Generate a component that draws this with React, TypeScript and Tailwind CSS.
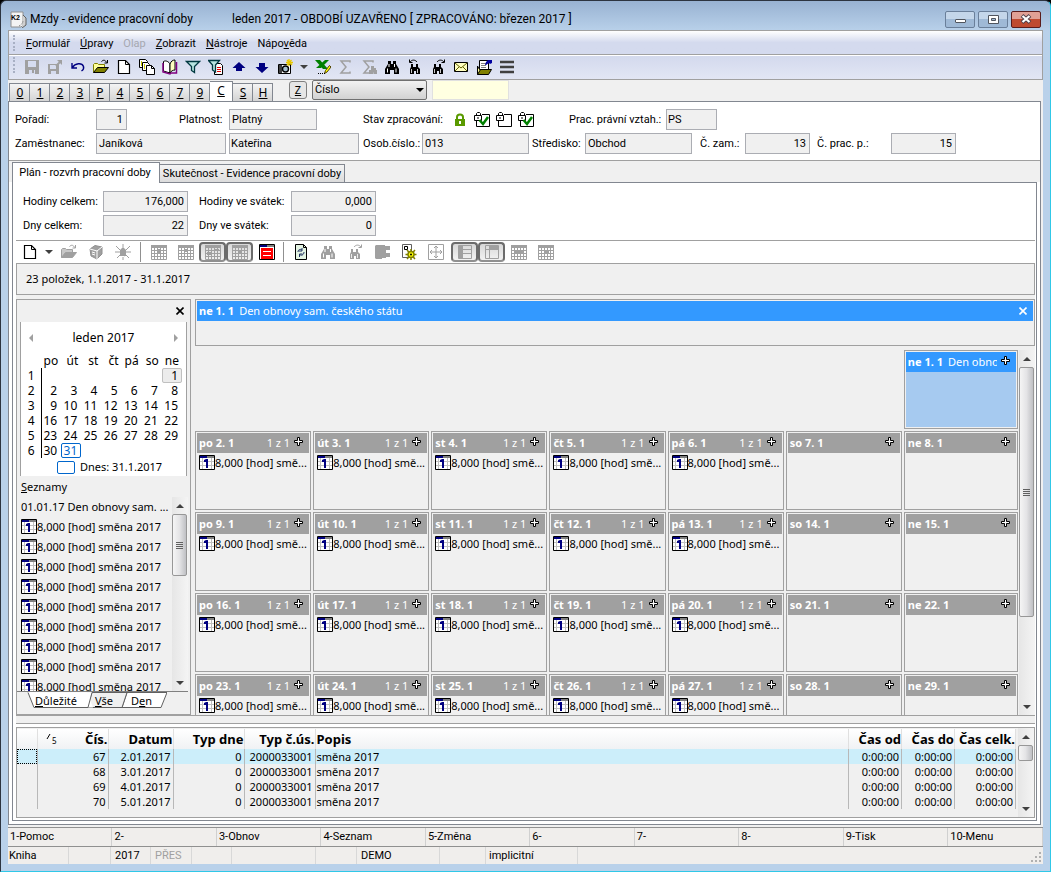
import { type ReactNode } from 'react';
import clsx from 'clsx';

const dayNames = ['po', 'út', 'st', 'čt', 'pá', 'so', 'ne'];

const monthWeeks = [
  [null, null, null, null, null, null, 1],
  [2, 3, 4, 5, 6, 7, 8],
  [9, 10, 11, 12, 13, 14, 15],
  [16, 17, 18, 19, 20, 21, 22],
  [23, 24, 25, 26, 27, 28, 29],
  [30, 31, null, null, null, null, null],
];

const menus = [
  { pre: '', key: 'F', post: 'ormulář' },
  { pre: '', key: 'Ú', post: 'pravy' },
  { pre: 'Olap', key: '', post: '', disabled: true },
  { pre: '', key: 'Z', post: 'obrazit' },
  { pre: '', key: 'N', post: 'ástroje' },
  { pre: 'Nápo', key: 'v', post: 'ěda' },
];

const pageTabs = ['0', '1', '2', '3', 'P', '4', '5', '6', '7', '9', 'C', 'S', 'H'];

const rows = [
  { id: 67, date: '2.01.2017' },
  { id: 68, date: '3.01.2017' },
  { id: 69, date: '4.01.2017' },
  { id: 70, date: '5.01.2017' },
];

const functionKeys = ['1-Pomoc', '2-', '3-Obnov', '4-Seznam', '5-Změna', '6-', '7-', '8-', '9-Tisk', '10-Menu'];

/* ---------- icons ---------- */

function Icon({ children, size = 16 }: { children: ReactNode; size?: number }) {
  return (
    <svg width={size} height={size} viewBox="0 0 16 16" fill="none" stroke="#000" aria-hidden="true" className="shrink-0">
      {children}
    </svg>
  );
}

function SaveIcon() {
  return (
    <Icon>
      <path d="M1 1h14v14H1z" fill="#a0a0a0" stroke="none" />
      <path d="M4 2h8v6H4zM5 11h6v4H5z" fill="#d6dcef" stroke="none" />
      <path d="M8 11h2v3H8z" fill="#a0a0a0" stroke="none" />
    </Icon>
  );
}

function SaveExitIcon() {
  return (
    <Icon>
      <path d="M1 5h11v10H1z" fill="#a0a0a0" stroke="none" />
      <path d="M3 6h6v4H3zM4 12h5v3H4z" fill="#d6dcef" stroke="none" />
      <path d="M9 7l5-5" stroke="#a0a0a0" strokeWidth="2" />
      <path d="M10 1h5v5z" fill="#a0a0a0" stroke="none" />
    </Icon>
  );
}

function UndoIcon() {
  return (
    <Icon>
      <path d="M2 4v5h5M2.500 8.500C5 4 12 3.500 13.500 7.500c.6 2-.5 3.500-2 4.500" stroke="#000080" strokeWidth="1.400" />
    </Icon>
  );
}

function OpenIcon({ off }: { off?: boolean }) {
  const line = off ? '#a0a0a0' : '#000';
  return (
    <Icon>
      <path d="M.5 13.500v-8l1-1h3l1 1h6v3" fill={off ? '#c8c8c8' : '#ffff99'} stroke={off ? line : '#808000'} />
      <path d="M.5 13.500l4-5h11l-4 5z" fill={off ? '#a0a0a0' : '#808000'} stroke={line} />
      <path d="M8.500 2.500c2-2 4-1.500 5 1M14.500 1v3h-3" stroke={line} />
    </Icon>
  );
}

function NewIcon() {
  return (
    <Icon>
      <path d="M2.500 1.500h7l4 4v9h-11z" fill="#fff" strokeWidth="1.200" />
      <path d="M9.500 1.500v4h4" />
    </Icon>
  );
}

function CopiesIcon() {
  return (
    <Icon>
      <path d="M.5.5h6l2 2v6h-8z" fill="#fff" />
      <path d="M2.500 2v5" stroke="#c8c800" />
      <path d="M3.500 3.500h5l2 2v6h-7z" fill="#fff" />
      <path d="M5.500 5v5" stroke="#c8c800" />
      <path d="M7.500 6.500h5l3 3v6h-8z" fill="#fff" />
      <path d="M12.500 6.500v3h3" />
    </Icon>
  );
}

function BookIcon() {
  return (
    <Icon>
      <path d="M8 14L1.500 12V2.500C4 1 7 3 8 5v9" fill="#fff" />
      <path d="M8 14V5c1-3 3-4 5-4v10c-2 0-4 1-5 3z" fill="#ffffc0" />
      <path d="M14.500 3v11H9l-1 1-7-2V4" stroke="#800080" strokeWidth="1.500" />
    </Icon>
  );
}

function FunnelIcon({ doc }: { doc?: boolean }) {
  return (
    <Icon>
      {doc && <path d="M6.500 4.500h6l2 2v9h-8z" fill="#fff" />}
      {doc && <path d="M9 8.500h4M9 10.500h4M9 12.500h4" stroke="#e00000" />}
      {doc ? (
        <path d="M.5 1.500h11L7.500 6v7l-3-2V6z" fill="#b8e4e0" stroke="#003840" strokeWidth="1.300" />
      ) : (
        <path d="M1.500 2.500h13l-5 5v6l-3-2v-4z" fill="#b8e4e0" stroke="#003840" strokeWidth="1.300" />
      )}
    </Icon>
  );
}

function ArrowIcon({ down }: { down?: boolean }) {
  return (
    <Icon>
      <path
        d={down ? 'M1.500 8L8 14l6.500-6H11V4H5v4z' : 'M1.500 9L8 3l6.500 6H11v3H5V9z'}
        fill="#000080"
        stroke="none"
      />
    </Icon>
  );
}

function CameraIcon() {
  return (
    <Icon>
      <path d="M1.500 5.500h12v9h-12z" fill="#fff" />
      <path d="M2 6h3v8H2z" fill="#404040" stroke="none" />
      <circle cx="8.500" cy="10" r="3" fill="#a8c0d0" strokeWidth="1.400" />
      <path d="M12 0v7M9 3.500h7M10 1l5 5M14.500 1L10 6" stroke="#e8c800" strokeWidth="1.300" />
    </Icon>
  );
}

function ExcelIcon() {
  return (
    <Icon>
      <path d="M0 1h5l8 9H8zM10 1h4L6 9H1z" fill="#008000" stroke="none" />
      <path d="M9.500 14.500l1-3 4-5 1.500 1.500-4 5z" fill="#ffff00" stroke="#504000" />
      <path d="M3 14.500h7" strokeDasharray="1 1" />
    </Icon>
  );
}

function SumIcon({ tree }: { tree?: boolean }) {
  return (
    <Icon>
      <path d="M12 3.500V2H3l5 6-5 6h9v-1.500" stroke="#a0a0a0" strokeWidth="1.500" />
      {tree && <path d="M10 7h3v2h2v2h1v4h-3v-2h-1v2H8v-4h2z" fill="#a0a0a0" stroke="none" />}
    </Icon>
  );
}

function BinocularsIcon({ arrow, off }: { arrow?: 'left' | 'right'; off?: boolean }) {
  const c = off ? '#a0a0a0' : '#000';
  if (arrow) {
    return (
      <Icon>
        <path d="M4 5h2v3h3V5h2v3l2 2v5h-4v-3H7v3H3v-5l1-2z" fill={c} stroke="none" />
        <path d="M4.500 10v4M10.500 10v4" stroke="#fff" strokeWidth=".8" />
        {arrow === 'left' && <path d="M2.500.500v3h3M3 3C5 .5 8 .5 10 3" stroke={c} />}
        {arrow === 'right' && <path d="M14.500.500v3h-3M14 3C12 .5 9 .5 7 3" stroke={c} />}
      </Icon>
    );
  }
  return (
    <Icon>
      <path d="M4 2h3v3h2V2h3v3l3 5v5h-5v-4H6v4H1v-5l3-5z" fill={c} stroke="none" />
      <path d="M3.500 9.500v4M12 9.500v4M5 5v3M10.500 5v3" stroke="#fff" />
    </Icon>
  );
}

function MailIcon() {
  return (
    <Icon>
      <path d="M1.500 3.500h13v9h-13z" fill="#ffffc0" />
      <path d="M2 4l6 5 6-5M2 12l4-4M14 12l-4-4" stroke="#606000" />
    </Icon>
  );
}

function NotesIcon() {
  return (
    <Icon>
      <path d="M3.500 1.500h9v9h-9z" fill="#fff" />
      <path d="M5 4.500h5M5 6.500h5M5 8.500h5" stroke="#808080" />
      <path d="M1.500 15.500V7l2 3.500h9" fill="#ffff99" />
      <path d="M1.500 15.500l3-5h11l-3 5z" fill="#808000" />
      <path d="M9 6l1-3 2-2h4v3l-2 1-1-1-3 2z" fill="#0000a0" stroke="none" />
    </Icon>
  );
}

function LinesIcon() {
  return (
    <Icon>
      <path d="M1 3h14M1 8h14M1 13h14" stroke="#404040" strokeWidth="2.500" />
    </Icon>
  );
}

function CubeIcon() {
  return (
    <Icon>
      <path d="M2 5l5-3.500 7 1.500v7l-5 5-6-3z" fill="#a0a0a0" stroke="#909090" />
      <path d="M2 5l7 2 5-4M9 7v8M4 8l3 1M4 10l3 1" stroke="#fff" />
    </Icon>
  );
}

function SparkIcon() {
  return (
    <Icon>
      <path d="M8 3l3 3v6H5V6z" fill="#a0a0a0" stroke="none" />
      <path d="M8 0v3M8 13v3M1 2l4 4M15 2l-4 4M0 8h5M11 8h5M2 14l3-3M14 14l-3-3M5 9l5 3" stroke="#a0a0a0" />
    </Icon>
  );
}

function GridIcon({ mark = 'M6 5h4v4H6z' }: { mark?: string }) {
  return (
    <Icon>
      <path d="M0 1h16v3H0z" fill="#a0a0a0" stroke="none" />
      <path d="M.5 1.500h15v14H.5zM.5 6.500h15M.5 9.500h15M.5 12.500h15M3.500 4v11M6.500 4v11M9.500 4v11M12.500 4v11" stroke="#a0a0a0" />
      <path d={mark} fill="#a0a0a0" stroke="none" />
    </Icon>
  );
}

function RedGridIcon() {
  return (
    <Icon>
      <path d="M.5.500h15v15H.5z" fill="#fff" />
      <path d="M1 1h7v2H1z" fill="#000080" stroke="none" />
      <path d="M8 1h7v2H8z" fill="#808080" stroke="none" />
      <path d="M2 4h12v11H2z" fill="#f00" stroke="none" />
      <path d="M4 7.500h8M4 11.500h8" stroke="#fff" />
    </Icon>
  );
}

function RefreshIcon() {
  return (
    <Icon>
      <path d="M2.500.5h8l3 3v12h-11z" fill="#e4f4e4" />
      <path d="M10.500.5v3h3" />
      <path d="M5 8c0-3 3-3 4-2M9 4v3H6M11 8c0 3-3 4-4 2.500M6.500 13v-3h3" stroke="#203060" />
    </Icon>
  );
}

function PuzzleIcon() {
  return (
    <Icon>
      <path d="M2 1h9v1h5v4h-4v3h4v4h-4v1H8v1H2l-1-1V2z" fill="#a0a0a0" stroke="none" />
    </Icon>
  );
}

function GearIcon() {
  return (
    <Icon>
      <path d="M1.500.5h9v13h-9z" fill="#fff" stroke="#606060" />
      <path d="M3.500 2.500h3v3h-3z" />
      <path d="M6 6l8 9M14 6l-8 9M10 5v11M4.500 10.500h11" stroke="#808000" strokeWidth="1.500" />
      <circle cx="10" cy="10.500" r="3" fill="#ffff00" stroke="#808000" strokeWidth="1.500" />
      <circle cx="10" cy="10.500" r="1" fill="#000" stroke="none" />
    </Icon>
  );
}

function MoveIcon() {
  return (
    <Icon>
      <path d="M.5.5h15v15H.5z" stroke="#a0a0a0" />
      <path d="M8 2v12M2 8h12M6 4l2-2 2 2M6 12l2 2 2-2M4 6L2 8l2 2M12 6l2 2-2 2" stroke="#a0a0a0" />
    </Icon>
  );
}

function PaneIcon({ side }: { side?: boolean }) {
  return (
    <Icon>
      <path d="M1.500 1.500h13v13h-13z" stroke="#a0a0a0" />
      <path d={side ? 'M5.500 5.500h9M5.500 1.500v13M6 9.500h8' : 'M1.500 5.500h13M5.500 1.500v13'} stroke="#a0a0a0" />
      <path d={side ? 'M2 2h4v12H2z' : 'M6 2h8v3H6z'} fill="#a0a0a0" stroke="none" />
    </Icon>
  );
}

function ShiftIcon() {
  return (
    <Icon>
      <path d="M.5.5h15v14H.5z" fill="#fff" />
      <path d="M1 1h7v2H1z" fill="#000080" stroke="none" />
      <path d="M8 1h7v2H8z" fill="#808080" stroke="none" />
      <path d="M3.500 3v11M12.500 3v11M1 6.500h14M1 10.500h14" stroke="#c0c0c0" />
      <path d="M5 5l2-1h2v9H7V7H5z" fill="#000080" stroke="none" />
    </Icon>
  );
}

function PlusIcon() {
  return (
    <svg width="10" height="10" viewBox="0 0 10 10" className="shrink-0" aria-hidden="true">
      <path d="M3.500.5h2v3h3v2h-3v3h-2v-3h-3v-2h3z" fill="#fff" stroke="#000" />
    </svg>
  );
}

function CloseIcon({ color }: { color: string }) {
  return (
    <svg width="8" height="8" viewBox="0 0 8 8" aria-hidden="true">
      <path d="M.5.5l7 7M7.500.5l-7 7" stroke={color} strokeWidth="1.600" />
    </svg>
  );
}

function Triangle({ dir, color = '#404040' }: { dir: 'up' | 'down' | 'left' | 'right'; color?: string }) {
  const d = { up: 'M0 6l4-4 4 4z', down: 'M0 2l4 4 4-4z', left: 'M6 0L2 4l4 4z', right: 'M2 0l4 4-4 4z' };
  return (
    <svg width="8" height="8" viewBox="0 0 8 8" aria-hidden="true" className="shrink-0">
      <path d={d[dir]} fill={color} />
    </svg>
  );
}

function LockIcon() {
  return (
    <svg width="12" height="14" viewBox="0 0 12 14" aria-hidden="true">
      <path d="M3 7V4a3 2.500 0 016 0v3" fill="none" stroke="#5a9a00" strokeWidth="2" />
      <path d="M1 6h10v7H1z" fill="#5a9a00" />
      <path d="M5 8h2v3H5z" fill="#fff" />
    </svg>
  );
}

function LockBoxIcon({ checked }: { checked?: boolean }) {
  return (
    <svg width="16" height="16" viewBox="0 0 16 16" fill="none" aria-hidden="true">
      <path d="M8 2.500h7.500v12H2.500V9" stroke="#000" />
      <path d="M2.500 3.500v-2l1-1h2l1 1v2" stroke="#000" />
      <path d="M.5 3.500h7v5h-7z" fill="#fff" stroke="#000" />
      <path d="M4 5v2" stroke="#000" />
      {checked && <path d="M5.500 8l3.500 4 5-7" stroke="#008000" strokeWidth="2.500" />}
    </svg>
  );
}

/* ---------- small building blocks ---------- */

function ToolButton({ label, children, pressed }: { label: string; children: ReactNode; pressed?: boolean }) {
  return (
    <button
      type="button"
      aria-label={label}
      className={clsx(
        'flex h-5 w-[27px] items-center justify-center',
        pressed && 'rounded-[4px] border-2 border-[#6c6c6c] border-b-[#909090] bg-gradient-to-b from-[#d8d8d8] to-[#f2f2f2]'
      )}
    >
      {children}
    </button>
  );
}

function MainButton({ label, children }: { label: string; children: ReactNode }) {
  return (
    <button type="button" aria-label={label} className="flex h-5 w-[23px] items-center justify-center">
      {children}
    </button>
  );
}

interface FieldProps {
  id: string;
  label: string;
  value: string;
  labelClass: string;
  inputClass: string;
}

function Field({ id, label, value, labelClass, inputClass }: FieldProps) {
  return (
    <div className="flex shrink-0 items-center font-['Roboto',sans-serif]">
      <label htmlFor={id} className={clsx('shrink-0 whitespace-nowrap pt-px', labelClass)}>
        {label}
      </label>
      <input
        id={id}
        readOnly
        defaultValue={value}
        className={clsx('h-[21px] shrink-0 border border-[#abadb3] bg-[#f0f0f0] outline-none', inputClass)}
      />
    </div>
  );
}

function Scrollbar({ thumb, grip = true }: { thumb: string; grip?: boolean }) {
  return (
    <div className="flex w-4 shrink-0 flex-col items-center bg-gradient-to-r from-[#e6e6e6] to-[#f4f4f4]">
      <div className="flex h-[17px] shrink-0 items-center">
        <Triangle dir="up" />
      </div>
      <div className="flex min-h-0 w-full flex-1 flex-col">
        <div
          className={clsx(
            'flex w-[15px] flex-col items-center justify-center gap-px rounded-[2px] border border-[#979797] bg-gradient-to-r from-[#f5f5f5] via-[#e4e4e6] to-[#bfc0c4]',
            thumb
          )}
        >
          {grip && [0, 1, 2, 3].map((n) => <span key={n} className="h-px w-[7px] bg-[#606060]" />)}
        </div>
      </div>
      <div className="flex h-[17px] shrink-0 items-center">
        <Triangle dir="down" />
      </div>
    </div>
  );
}

/* ---------- window parts ---------- */

function TitleBar() {
  return (
    <header className="flex h-[29px] shrink-0 items-center px-[2px] pt-[7px]">
      <svg width="17" height="17" viewBox="0 0 17 17" aria-hidden="true">
        <path d="M1 1h12v13l-2 2H1z" fill="#f4f4f4" stroke="#909090" />
        <path d="M13 4l3 3v7l-4 3" fill="#d0d0d0" stroke="#606060" />
        <text x="1" y="9" fontSize="7" fontWeight="700" fontFamily="Liberation Sans, sans-serif" fill="#000">
          K2
        </text>
        <path d="M9 15c2-1 4-3 4-5" stroke="#707070" fill="none" strokeDasharray="1 1" />
      </svg>
      <h1 className="ml-[3px] flex-1 whitespace-pre font-['Roboto',sans-serif] text-[12px] leading-4">
        <span className="inline-block w-[202px]">Mzdy - evidence pracovní doby</span>
        <span>leden 2017 - OBDOBÍ UZAVŘENO [ ZPRACOVÁNO: březen 2017 ]</span>
      </h1>
      <div className="flex gap-[3px]">
        <button type="button" aria-label="Minimalizovat" className="flex h-[17px] w-[30px] items-center justify-center rounded-[2px] border border-[#6a7f9a] bg-gradient-to-b from-[#c4d6ea] from-50% to-[#9fb9d6] to-50%">
          <span className="mt-1 h-1 w-[11px] rounded-[1px] border border-[#50555e] bg-white" />
        </button>
        <button type="button" aria-label="Maximalizovat" className="flex h-[17px] w-[30px] items-center justify-center rounded-[2px] border border-[#6a7f9a] bg-gradient-to-b from-[#c4d6ea] from-50% to-[#9fb9d6] to-50%">
          <svg width="11" height="9" viewBox="0 0 11 9" aria-hidden="true">
            <path d="M.5.5h10v8H.5z" fill="#fff" stroke="#50555e" />
            <path d="M3.500 3.500h4v2h-4z" fill="#9fb9d6" stroke="#50555e" />
          </svg>
        </button>
        <button type="button" aria-label="Zavřít" className="flex h-[17px] w-[30px] items-center justify-center rounded-[2px] border border-[#5a1c1c] bg-gradient-to-b from-[#e0a095] from-50% to-[#bf4a30] to-50%">
          <svg width="12" height="10" viewBox="0 0 12 10" aria-hidden="true">
            <path d="M2 1.500l8 7M10 1.500l-8 7" stroke="#50404a" strokeWidth="4" />
            <path d="M2.500 2l7 6M9.500 2l-7 6" stroke="#fff" strokeWidth="2.200" />
          </svg>
        </button>
      </div>
    </header>
  );
}

function Grip() {
  return <span className="ml-1 h-4 w-[2px] shrink-0 border-l-2 border-dotted border-[#a8b0c4]" />;
}

function MenuAndToolbar() {
  return (
    <div className="shrink-0 border border-[#a0a0a0]">
      <nav className="flex h-6 items-center border-b border-[#a0a0a0] bg-gradient-to-b from-white to-[#d4daee] to-50%">
        <Grip />
        <div className="ml-[11px] flex gap-[10px] font-['Roboto',sans-serif] text-[11px]">
          {menus.map((m) => (
            <button key={m.pre + m.key} type="button" className={clsx('pt-1', m.disabled && 'text-[#a6a8b0]')}>
              {m.pre}
              <span className="underline">{m.key}</span>
              {m.post}
            </button>
          ))}
        </div>
      </nav>
      <div className="flex h-6 items-start border-t border-white bg-gradient-to-b from-[#d3d9ed] to-[#e2e6f4] pt-px">
        <Grip />
        <div className="ml-[5px] flex items-center">
          <MainButton label="Uložit"><SaveIcon /></MainButton>
          <MainButton label="Uložit a zavřít"><SaveExitIcon /></MainButton>
          <MainButton label="Zpět"><UndoIcon /></MainButton>
          <MainButton label="Otevřít"><OpenIcon /></MainButton>
          <MainButton label="Nový"><NewIcon /></MainButton>
          <MainButton label="Kopie"><CopiesIcon /></MainButton>
          <MainButton label="Kniha"><BookIcon /></MainButton>
          <MainButton label="Filtr"><FunnelIcon /></MainButton>
          <MainButton label="Nastavení filtru"><FunnelIcon doc /></MainButton>
          <MainButton label="Předchozí"><ArrowIcon /></MainButton>
          <MainButton label="Další"><ArrowIcon down /></MainButton>
          <MainButton label="Snímek"><CameraIcon /></MainButton>
          <button type="button" aria-label="Více" className="flex w-[15px] justify-center">
            <Triangle dir="down" />
          </button>
          <MainButton label="Excel"><ExcelIcon /></MainButton>
          <MainButton label="Součet"><SumIcon /></MainButton>
          <MainButton label="Součet skupin"><SumIcon tree /></MainButton>
          <MainButton label="Hledat"><BinocularsIcon /></MainButton>
          <MainButton label="Hledat zpět"><BinocularsIcon arrow="left" /></MainButton>
          <MainButton label="Hledat další"><BinocularsIcon arrow="right" /></MainButton>
          <MainButton label="Pošta"><MailIcon /></MainButton>
          <MainButton label="Poznámky"><NotesIcon /></MainButton>
          <MainButton label="Seznam"><LinesIcon /></MainButton>
        </div>
      </div>
    </div>
  );
}

function PageTabs() {
  return (
    <div className="flex h-[21px] shrink-0 items-end bg-[#f0f0f0] text-[12px]">
      <div role="tablist" className="flex items-end pl-px">
        {pageTabs.map((t) => (
          <button
            key={t}
            type="button"
            role="tab"
            aria-selected={t === 'C'}
            className={clsx(
              'border border-b-0 border-[#828790] underline',
              t === 'C'
                ? '-mb-px h-[21px] w-[23px] border-l-0 bg-white pb-1'
                : 'h-[18px] w-5 border-l-0 bg-gradient-to-b from-[#f4f4f4] to-[#d4d4d4] pl-px first:w-[21px] first:border-l'
            )}
          >
            {t}
          </button>
        ))}
      </div>
      <button type="button" className="mb-[2px] ml-4 h-[18px] w-[18px] rounded-[3px] border border-[#808080] bg-[#e6e6e6] text-[11px] leading-4 underline">
        Z
      </button>
      <div className="relative mb-px ml-[5px] flex">
        <select aria-label="Řadit podle" className="h-5 w-[115px] appearance-none rounded-[2px] border border-[#707070] bg-gradient-to-b from-[#f2f2f2] to-[#d2d2d2] pl-[2px] font-['Roboto',sans-serif] text-[11px] leading-4">
          <option>Číslo</option>
        </select>
        <span className="pointer-events-none absolute right-[3px] top-[6px]">
          <Triangle dir="down" color="#000" />
        </span>
      </div>
      <input aria-label="Hledat" className="mb-px ml-[5px] h-5 w-[77px] border border-[#e0e0e0] bg-[#ffffe1]" />
    </div>
  );
}

function EmployeeForm() {
  return (
    <div className="flex h-[59px] shrink-0 flex-col gap-[3px] border-b border-[#a0a0a0] bg-white pl-[6px] pt-[7px] font-['Roboto',sans-serif]">
      <div className="flex items-center">
        <Field id="order" label="Pořadí:" value="1" labelClass="w-[81px]" inputClass="w-[31px] pr-[3px] text-right" />
        <div className="w-[52px]" />
        <Field id="valid" label="Platnost:" value="Platný" labelClass="w-[50px]" inputClass="w-[88px] pl-[2px]" />
        <div className="w-[46px]" />
        <span className="w-[91px] whitespace-nowrap pt-px">Stav zpracování:</span>
        <div className="flex w-[115px] items-center">
          <LockIcon />
          <span className="ml-2 flex gap-[6px]">
            <LockBoxIcon checked />
            <LockBoxIcon />
            <LockBoxIcon checked />
          </span>
        </div>
        <Field id="relation" label="Prac. právní vztah.:" value="PS" labelClass="w-[97px]" inputClass="w-[51px] pl-px" />
      </div>
      <div className="flex items-center">
        <Field id="surname" label="Zaměstnanec:" value="Janíková" labelClass="w-[81px]" inputClass="w-[130px] pl-[2px]" />
        <input aria-label="Jméno" readOnly defaultValue="Kateřina" className="ml-[3px] mr-[4px] h-[21px] w-[130px] border border-[#abadb3] bg-[#f0f0f0] pl-px outline-none" />
        <Field id="pid" label="Osob.číslo.:" value="013" labelClass="w-[59px]" inputClass="w-[107px] pl-[2px]" />
        <div className="w-[3px]" />
        <Field id="centre" label="Středisko:" value="Obchod" labelClass="w-[53px]" inputClass="w-[107px] pl-[2px]" />
        <div className="w-[8px]" />
        <Field id="empno" label="Č. zam.:" value="13" labelClass="w-[45px]" inputClass="w-[65px] pr-[3px] text-right" />
        <div className="w-[7px]" />
        <Field id="relno" label="Č. prac. p.:" value="15" labelClass="w-[74px]" inputClass="w-[65px] pr-[3px] text-right" />
      </div>
    </div>
  );
}

function PlanToolbar() {
  return (
    <div className="flex h-6 shrink-0 items-center border-y border-[#a0a0a0] bg-white">
      <ToolButton label="Nový"><NewIcon /></ToolButton>
      <button type="button" aria-label="Více" className="flex w-3 justify-center">
        <Triangle dir="down" />
      </button>
      <ToolButton label="Otevřít"><OpenIcon off /></ToolButton>
      <ToolButton label="Smazat"><CubeIcon /></ToolButton>
      <ToolButton label="Zrušit"><SparkIcon /></ToolButton>
      <span className="mx-1 h-5 w-px bg-[#909090]" />
      <ToolButton label="Den"><GridIcon /></ToolButton>
      <ToolButton label="Pracovní týden"><GridIcon mark="M7 5h3v3H7z" /></ToolButton>
      <ToolButton label="Týden" pressed><GridIcon mark="M2 8h5v3H2zM10 5h4v2h-4z" /></ToolButton>
      <ToolButton label="Měsíc" pressed><GridIcon mark="M7 7h3v3H7z" /></ToolButton>
      <ToolButton label="Svátky"><RedGridIcon /></ToolButton>
      <span className="mx-[3px] h-5 w-px bg-[#909090]" />
      <ToolButton label="Obnovit"><RefreshIcon /></ToolButton>
      <ToolButton label="Hledat"><BinocularsIcon off /></ToolButton>
      <ToolButton label="Hledat další"><BinocularsIcon off arrow="right" /></ToolButton>
      <ToolButton label="Modul"><PuzzleIcon /></ToolButton>
      <ToolButton label="Nastavení"><GearIcon /></ToolButton>
      <ToolButton label="Přesunout"><MoveIcon /></ToolButton>
      <span className="w-[2px]" />
      <ToolButton label="Levý panel" pressed><PaneIcon side /></ToolButton>
      <ToolButton label="Horní panel" pressed><PaneIcon /></ToolButton>
      <ToolButton label="Předchozí období"><GridIcon mark="M3 7h6V5l4 3-4 3V9H3z" /></ToolButton>
      <ToolButton label="Dnes"><GridIcon mark="M6 6h5v4H6z" /></ToolButton>
    </div>
  );
}

function MiniCalendar() {
  return (
    <div className="mx-[3px] shrink-0 border-x border-[#a0a0a0] bg-white pb-px pt-2 text-[12px]">
      <div className="flex items-center justify-between px-[6px]">
        <button type="button" aria-label="Předchozí měsíc"><Triangle dir="left" color="#a0a0a0" /></button>
        <span className="leading-4">leden 2017</span>
        <button type="button" aria-label="Další měsíc"><Triangle dir="right" color="#a0a0a0" /></button>
      </div>
      <table className="mt-[6px] w-[161px] table-fixed border-collapse leading-[15px]">
        <thead>
          <tr>
            <th className="w-[20px]" />
            {dayNames.map((d) => (
              <th key={d} className="h-4 p-0 pr-[3px] text-right font-normal">{d}</th>
            ))}
          </tr>
        </thead>
        <tbody>
          {monthWeeks.map((week, w) => (
            <tr key={w}>
              <td className="h-[15px] border-r border-black p-0 pr-[6px] text-right">{w + 1}</td>
              {week.map((d, i) => (
                <td key={i} className="p-0 text-right">
                  <span
                    className={clsx(
                      'block pr-1',
                      d === 1 && 'rounded-[2px] bg-[#ececec] outline outline-1 -outline-offset-1 outline-[#c0c0c0]',
                      d === 31 && 'rounded-[2px] text-[#0066cc] outline outline-1 -outline-offset-1 outline-[#0066cc]'
                    )}
                  >
                    {d}
                  </span>
                </td>
              ))}
            </tr>
          ))}
        </tbody>
      </table>
      <div className="ml-9 mt-px flex h-4 items-center gap-[5px] whitespace-nowrap text-[11px]">
        <span className="h-[13px] w-[18px] rounded-[2px] border border-[#0066cc]" />
        Dnes: 31.1.2017
      </div>
    </div>
  );
}

function ListTabs() {
  return (
    <div className="relative h-[22px] shrink-0">
      <svg className="absolute inset-0" width="150" height="20" viewBox="0 0 150 20" fill="none" stroke="#606060" aria-hidden="true">
        <path d="M105 15.500L110 .5h40l-6 15z" fill="#fff" />
        <path d="M70 15.500L75 .5h35l-5 15z" fill="#f0f0f0" />
        <path d="M17 15.500L12 .5h58l6 15z" fill="#fff" stroke="none" />
        <path d="M11 .5l6 15h54l4-15" fill="#fff" />
      </svg>
      <div className="relative flex gap-[18px] pl-[18px] leading-[17px]">
        <button type="button"><u>D</u>ůležité</button>
        <button type="button"><u>V</u>še</button>
        <button type="button">D<u>e</u>n</button>
      </div>
    </div>
  );
}

function Sidebar() {
  return (
    <aside className="flex w-[175px] shrink-0 flex-col border border-[#a0a0a0] bg-[#f0f0f0]">
      <div className="flex h-[22px] shrink-0 items-center justify-end pr-[6px]">
        <button type="button" aria-label="Zavřít panel"><CloseIcon color="#000" /></button>
      </div>
      <MiniCalendar />
      <div className="shrink-0 pl-1 pt-[3px] leading-4"><u>S</u>eznamy</div>
      <div className="mr-[2px] mt-[2px] flex min-h-0 flex-1 border-b border-[#808080]">
        <ul className="min-w-0 flex-1 overflow-hidden pl-1 leading-3">
          <li className="flex h-5 items-center whitespace-nowrap">01.01.17 Den obnovy sam. ...</li>
          {Array.from({ length: 9 }, (_, i) => (
            <li key={i} className="flex h-5 items-center whitespace-nowrap">
              <ShiftIcon />
              8,000 [hod] směna 2017
            </li>
          ))}
        </ul>
        <Scrollbar thumb="h-[62px]" />
      </div>
      <ListTabs />
    </aside>
  );
}

function DayCell({ day, weekday }: { day: number; weekday: number }) {
  const holiday = day === 1;
  return (
    <div className="h-[79px] min-w-0 border border-[#a0a0a0] p-px">
      <div
        className={clsx(
          'flex h-5 items-center pl-[2px] pr-[5px] text-white',
          holiday ? 'bg-[#3399ff]' : 'bg-[#a0a0a0]'
        )}
      >
        <span className="shrink-0 whitespace-nowrap text-[11px] font-bold">{`${dayNames[weekday]} ${day}. 1`}</span>
        <span className="ml-[5px] mr-1 min-w-0 flex-1 overflow-hidden whitespace-nowrap text-right">
          {holiday ? <span className="flex">Den obnovy</span> : weekday < 5 && '1 z 1'}
        </span>
        <button type="button" aria-label="Přidat" className="mb-[3px]"><PlusIcon /></button>
      </div>
      {holiday && <div className="h-[55px] bg-[#a6caf0]" />}
      {weekday < 5 && (
        <div className="mt-[2px] flex items-center overflow-hidden whitespace-nowrap pl-[2px] leading-4">
          <ShiftIcon />
          8,000 [hod] smě...
        </div>
      )}
    </div>
  );
}

function MonthView() {
  return (
    <section className="flex min-w-0 flex-1 flex-col">
      <div className="h-[47px] shrink-0 border border-[#a0a0a0] p-px">
        <div className="flex h-5 items-center bg-[#3399ff] pl-[2px] pr-[6px] text-white">
          <b className="text-[11px]">ne 1. 1</b>
          <span className="ml-[5px] flex-1">Den obnovy sam. českého státu</span>
          <button type="button" aria-label="Zavřít"><CloseIcon color="#fff" /></button>
        </div>
      </div>
      <div className="mt-1 flex min-h-0 flex-1">
        <div className="grid min-w-0 flex-1 auto-rows-max grid-cols-[repeat(6,minmax(0,116fr))_minmax(0,114fr)] gap-[2px] overflow-hidden">
          {monthWeeks.slice(0, 5).map((week) =>
            week.map((d, i) => (d ? <DayCell key={i} day={d} weekday={i} /> : <div key={i} />))
          )}
        </div>
        <div className="ml-px flex">
          <Scrollbar thumb="h-[250px]" />
        </div>
      </div>
    </section>
  );
}

function RecordsTable() {
  const head = 'h-5 whitespace-nowrap border-r border-[#e0e0e0] p-0 text-[13px] font-bold';
  const cell = 'h-[15px] border-r border-[#b8b8b8] p-0 pr-[2px] text-right';
  return (
    <div className="flex h-[91px] shrink-0 border border-[#a0a0a0] bg-[#f0f0f0]">
      <div className="min-w-0 flex-1 pr-[2px] pt-px">
        <table className="w-full table-fixed border-collapse leading-[15px]">
          <thead>
            <tr className="bg-gradient-to-b from-white to-[#f0f2f4]">
              <th className={clsx(head, 'w-5')} />
              <th className={clsx(head, 'w-[71px]')}>
                <span className="flex items-center justify-between pl-2">
                  <svg width="12" height="12" viewBox="0 0 12 12" aria-hidden="true">
                    <path d="M1 6l3-5" stroke="#000" />
                    <text x="6" y="11" fontSize="8" fontWeight="400" fontFamily="Noto Sans, sans-serif">5</text>
                  </svg>
                  Čís.
                </span>
              </th>
              <th className={clsx(head, 'w-[65px] text-right')}>Datum</th>
              <th className={clsx(head, 'w-[71px] text-right')}>Typ dne</th>
              <th className={clsx(head, 'w-[71px] text-right')}>Typ č.ús.</th>
              <th className={clsx(head, 'pl-px text-left')}>Popis</th>
              <th className={clsx(head, 'w-[53px] text-right')}>Čas od</th>
              <th className={clsx(head, 'w-[53px] text-right')}>Čas do</th>
              <th className={clsx(head, 'w-[61px] text-right')}>Čas celk.</th>
            </tr>
          </thead>
          <tbody>
            {rows.map((r, i) => (
              <tr key={r.id} className={i === 0 ? 'bg-[#cceefa]' : 'bg-[#f0f0f0]'}>
                <td className={clsx(cell, i === 0 && 'outline outline-1 -outline-offset-1 outline-dotted outline-black')} />
                <td className={cell}>{r.id}</td>
                <td className={cell}>{r.date}</td>
                <td className={cell}>0</td>
                <td className={cell}>2000033001</td>
                <td className="border-r border-[#b8b8b8] p-0 pl-px text-left">směna 2017</td>
                <td className={cell}>0:00:00</td>
                <td className={cell}>0:00:00</td>
                <td className={cell}>0:00:00</td>
              </tr>
            ))}
          </tbody>
        </table>
      </div>
      <Scrollbar thumb="h-4" grip={false} />
    </div>
  );
}

function StatusBars() {
  return (
    <footer className="shrink-0 font-['Roboto',sans-serif] leading-[18px]">
      <div className="mt-[2px] flex h-[19px] border-t border-[#909090] bg-[#f0eeec]">
        {functionKeys.map((k) => (
          <button
            key={k}
            type="button"
            className="min-w-0 flex-[104] border-r border-[#d0d0d0] pl-[2px] text-left last:flex-[94]"
          >
            {k}
          </button>
        ))}
      </div>
      <div className="flex h-[18px] border-t border-[#909090] bg-[#f0eeec]">
        <span className="w-[61px] border-r border-[#d8d8d8] pl-px">Kniha</span>
        <span className="w-[42px] border-r border-[#d8d8d8]" />
        <span className="w-[40px] border-r border-[#d8d8d8] pl-1">2017</span>
        <span className="w-[41px] border-r border-[#d8d8d8] pl-1 text-[#a0a0a0]">PŘES</span>
        <span className="w-[40px] border-r border-[#d8d8d8]" />
        <span className="w-[84px] border-r border-[#d8d8d8]" />
        <span className="w-[41px] border-r border-[#d8d8d8]" />
        <span className="w-[83px] border-r border-[#d8d8d8] pl-1">DEMO</span>
        <span className="w-[46px] border-r border-[#d8d8d8]" />
        <span className="w-[92px] border-r border-[#d8d8d8] pl-[3px]">implicitní</span>
        <span className="flex flex-1 items-end justify-end p-[2px]">
          <svg width="10" height="10" viewBox="0 0 10 10" fill="#b0b0b0" aria-hidden="true">
            <path d="M8 0h2v2H8zM8 4h2v2H8zM8 8h2v2H8zM4 4h2v2H4zM4 8h2v2H4zM0 8h2v2H0z" />
          </svg>
        </span>
      </div>
    </footer>
  );
}

export default function App() {
  return (
    <div className="h-screen bg-black font-['Noto_Sans','Open_Sans',sans-serif] text-[11px] text-black">
      <div className="flex h-full flex-col rounded-t-[6px] border border-[#2c3440] border-r-[#30c8e8] border-b-[#30c8e8] bg-gradient-to-b from-[#98b2d2] to-[#b9d1ea] to-[30px] px-[7px] pb-[7px]">
        <TitleBar />
        <div className="flex min-h-0 flex-1 flex-col bg-[#f0f0f0]">
          <MenuAndToolbar />
          <PageTabs />
          <main className="mr-[2px] flex min-h-0 flex-1 flex-col border border-[#828790] bg-white">
            <EmployeeForm />
            <div role="tablist" className="flex h-[21px] shrink-0 items-end bg-[#f0f0f0] pl-[3px] font-['Roboto',sans-serif]">
              <button type="button" role="tab" aria-selected="true" className="relative -mb-px h-[21px] w-[148px] whitespace-nowrap border border-b-0 border-[#828790] bg-white pr-[2px] leading-4">
                Plán - rozvrh pracovní doby
              </button>
              <button type="button" role="tab" aria-selected="false" className="h-[18px] w-[185px] whitespace-nowrap border border-b-0 border-l-0 border-[#828790] bg-gradient-to-b from-[#f4f4f4] to-[#dcdcdc] leading-4">
                Skutečnost - Evidence pracovní doby
              </button>
            </div>
            <div className="mx-[3px] mb-[3px] flex min-h-0 flex-1 flex-col border border-[#828790] bg-white pb-[2px] pl-[3px] pr-px">
              <div className="flex shrink-0 flex-col gap-[3px] pb-1 pl-[7px] pt-2">
                <div className="flex">
                  <Field id="hours" label="Hodiny celkem:" value="176,000" labelClass="w-[80px]" inputClass="w-[85px] pr-[3px] text-right" />
                  <div className="w-[11px]" />
                  <Field id="holhours" label="Hodiny ve svátek:" value="0,000" labelClass="w-[92px]" inputClass="w-[85px] pr-[3px] text-right" />
                </div>
                <div className="flex">
                  <Field id="days" label="Dny celkem:" value="22" labelClass="w-[80px]" inputClass="w-[85px] pr-[3px] text-right" />
                  <div className="w-[11px]" />
                  <Field id="holdays" label="Dny ve svátek:" value="0" labelClass="w-[92px]" inputClass="w-[85px] pr-[3px] text-right" />
                </div>
              </div>
              <PlanToolbar />
              <div className="flex h-[31px] shrink-0 items-center border border-t-0 border-[#a0a0a0] bg-[#f0f0f0] pl-[9px]">
                23 položek, 1.1.2017 - 31.1.2017
              </div>
              <div className="flex min-h-0 flex-1 gap-1 border-b border-[#a0a0a0] bg-[#f0f0f0] pt-1">
                <Sidebar />
                <MonthView />
              </div>
              <div className="mb-[3px] h-2 shrink-0 border-b border-[#a0a0a0] bg-[#f0f0f0]" />
              <RecordsTable />
            </div>
          </main>
          <StatusBars />
        </div>
      </div>
    </div>
  );
}
